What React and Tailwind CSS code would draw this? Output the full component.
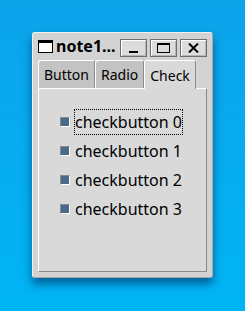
import React from "react";

const font = { fontFamily: '"Noto Sans", "DejaVu Sans", sans-serif' };

function TitleButton({ children }) {
  return (
    <div className="w-[27px] h-[18px] flex items-center justify-center bg-[#dcdcdc] border border-[#6e6e6e] shadow-[inset_1px_1px_0_#ffffff,inset_-1px_-1px_0_#b5b5b5]">
      {children}
    </div>
  );
}

function Tab({ label, selected }) {
  if (selected) {
    return (
      <div className="h-[29px] px-[5px] flex items-center bg-[#d9d9d9] border-l border-t border-white border-r border-r-[#8a8a8a] rounded-t-[3px] text-[14px] text-black -mb-px relative z-10">
        {label}
      </div>
    );
  }
  return (
    <div className="h-[28px] mt-[1px] px-[5px] flex items-center bg-[#c3c3c3] border-l border-t border-white border-r border-r-[#8a8a8a] rounded-t-[3px] text-[14px] text-black">
      {label}
    </div>
  );
}

function CheckRow({ label, focused }) {
  return (
    <div className="flex items-center h-[26px]">
      <div className="w-[10px] h-[10px] bg-[#4a6a8a] border-t border-l border-[#8a8a8a] border-r border-b border-r-white border-b-white" />
      <div
        className={
          "ml-[4px] h-[26px] flex items-center px-[1px] text-[16px] text-black " +
          (focused ? "outline outline-1 outline-dotted outline-black -outline-offset-1" : "")
        }
      >
        {label}
      </div>
    </div>
  );
}

export default function App() {
  return (
    <div
      className="w-[245px] h-[311px] bg-gradient-to-b from-[#0ca3ea] to-[#00b5f5] pt-[32px] pl-[32px]"
      style={font}
    >
      <div className="w-[181px] h-[246px] bg-[#d3d3d3] rounded-[3px] border-t border-l border-[#f0f0f0] border-r border-b border-r-[#a8a8a8] border-b-[#a8a8a8] shadow-[0_6px_10px_rgba(0,40,90,0.6)] flex flex-col">
        {/* title bar */}
        <div className="h-[26px] flex items-center pl-[5px] pr-[5px]">
          <div className="w-[15px] h-[13px] border border-black border-t-[3px] bg-white" />
          <div className="ml-[3px] font-bold text-[16px] text-black leading-none flex-1">note1...</div>
          <div className="flex gap-[3px] mt-[3px]">
            <TitleButton>
              <div className="w-[9px] h-[2px] bg-black mt-[8px]" />
            </TitleButton>
            <TitleButton>
              <div className="w-[13px] h-[10px] border border-black border-t-2" />
            </TitleButton>
            <TitleButton>
              <svg width="11" height="10" viewBox="0 0 11 10">
                <path d="M1 0.5 L10 9.5 M10 0.5 L1 9.5" stroke="#000" strokeWidth="2" />
              </svg>
            </TitleButton>
          </div>
        </div>
        {/* notebook */}
        <div className="px-[5px] flex flex-col flex-1 pb-[5px]">
          <div className="flex items-end">
            <Tab label="Button" />
            <Tab label="Radio" />
            <Tab label="Check" selected />
          </div>
          <div className="flex-1 bg-[#d9d9d9] border-t border-l border-white border-r border-b border-r-[#8a8a8a] border-b-[#8a8a8a] pt-[20px] pl-[21px] flex flex-col gap-[3px]">
            <CheckRow label="checkbutton 0" focused />
            <CheckRow label="checkbutton 1" />
            <CheckRow label="checkbutton 2" />
            <CheckRow label="checkbutton 3" />
          </div>
        </div>
      </div>
    </div>
  );
}
